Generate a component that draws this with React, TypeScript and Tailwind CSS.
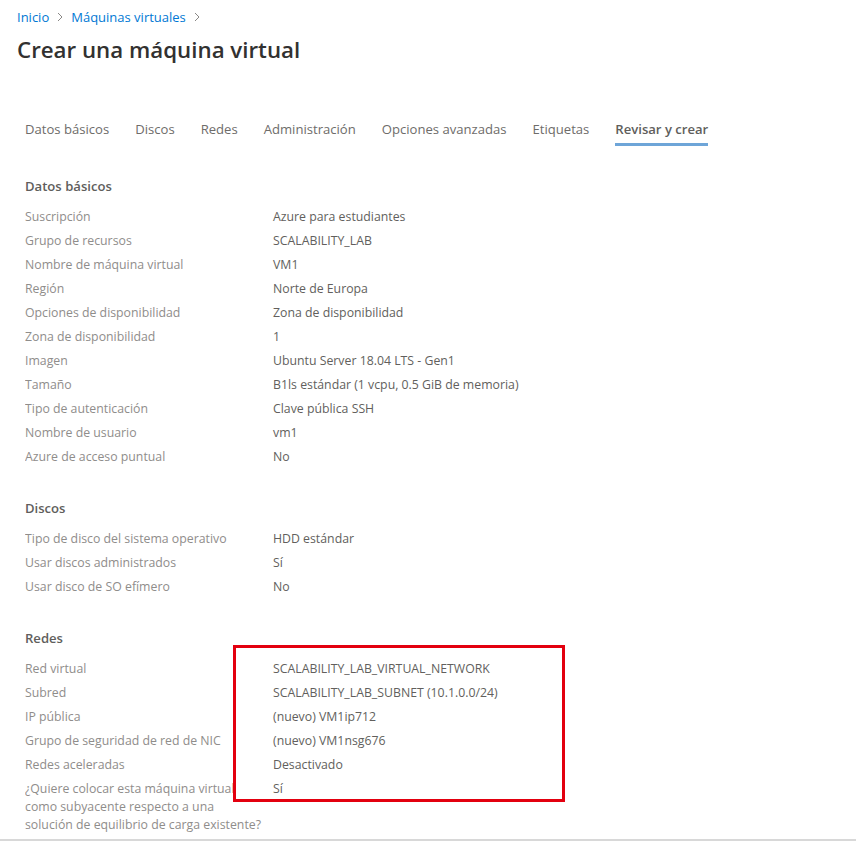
const tabs = [
    'Datos básicos',
    'Discos',
    'Redes',
    'Administración',
    'Opciones avanzadas',
    'Etiquetas',
    'Revisar y crear',
];

type Row = { label: React.ReactNode; value: string };

const basics: Row[] = [
    { label: 'Suscripción', value: 'Azure para estudiantes' },
    { label: 'Grupo de recursos', value: 'SCALABILITY_LAB' },
    { label: 'Nombre de máquina virtual', value: 'VM1' },
    { label: 'Región', value: 'Norte de Europa' },
    { label: 'Opciones de disponibilidad', value: 'Zona de disponibilidad' },
    { label: 'Zona de disponibilidad', value: '1' },
    { label: 'Imagen', value: 'Ubuntu Server 18.04 LTS - Gen1' },
    { label: 'Tamaño', value: 'B1ls estándar (1 vcpu, 0.5 GiB de memoria)' },
    { label: 'Tipo de autenticación', value: 'Clave pública SSH' },
    { label: 'Nombre de usuario', value: 'vm1' },
    { label: 'Azure de acceso puntual', value: 'No' },
];

const disks: Row[] = [
    { label: 'Tipo de disco del sistema operativo', value: 'HDD estándar' },
    { label: 'Usar discos administrados', value: 'Sí' },
    { label: 'Usar disco de SO efímero', value: 'No' },
];

const networks: Row[] = [
    { label: 'Red virtual', value: 'SCALABILITY_LAB_VIRTUAL_NETWORK' },
    { label: 'Subred', value: 'SCALABILITY_LAB_SUBNET (10.1.0.0/24)' },
    { label: 'IP pública', value: '(nuevo) VM1ip712' },
    { label: 'Grupo de seguridad de red de NIC', value: '(nuevo) VM1nsg676' },
    { label: 'Redes aceleradas', value: 'Desactivado' },
    {
        label: (
            <>
                ¿Quiere colocar esta máquina virtual
                <br />
                como subyacente respecto a una
                <br />
                solución de equilibrio de carga existente?
            </>
        ),
        value: 'Sí',
    },
];

const Section = ({ title, rows }: { title: string; rows: Row[] }) => (
    <section className="mt-[30px]">
        <h2 className="text-[13.1px] leading-[20px] font-semibold text-[#605e5c]">{title}</h2>
        <div className="mt-[8px] flex flex-col">
            {rows.map((r, i) => (
                <div key={i} className="flex pt-[4px] pb-[2px] text-[12.3px] leading-[18px]">
                    <div className="w-[248px] shrink-0 text-[#8f8d8b] whitespace-nowrap overflow-hidden">{r.label}</div>
                    <div className="text-[#625f5d]">{r.value}</div>
                </div>
            ))}
        </div>
    </section>
);

const Chevron = () => (
    <span className="mx-[7px] text-[#8a8886]">
        <svg width="8" height="10" viewBox="0 0 8 10" fill="none" stroke="currentColor" strokeWidth="1">
            <path d="M2 1l4 4-4 4" />
        </svg>
    </span>
);

export default function App() {
    return (
        <div className="relative w-[856px] h-[842px] overflow-hidden bg-white font-['Segoe_UI','Open_Sans',sans-serif]">
            <div className="pl-[17px] pt-[8px]">
                <nav className="flex items-center text-[13px] leading-[18px] text-[#0078d4]">
                    <span>Inicio</span>
                    <Chevron />
                    <span>Máquinas virtuales</span>
                    <Chevron />
                </nav>
                <h1 className="mt-[8px] text-[22.3px] leading-[32px] font-semibold text-[#323130]">Crear una máquina virtual</h1>
            </div>

            <div className="pl-[25px]">
                <ul className="mt-[53px] flex gap-[26px] text-[13.1px] leading-[20px]">
                    {tabs.map((t, i) => {
                        const active = i === tabs.length - 1;
                        return (
                            <li
                                key={t}
                                className={
                                    active
                                        ? 'pb-[4px] border-b-[3px] border-[#6ea5d8] text-[#605e5c] font-semibold'
                                        : 'pb-[4px] border-b-[3px] border-transparent text-[#6e6c6a]'
                                }
                            >
                                {t}
                            </li>
                        );
                    })}
                </ul>

                <Section title="Datos básicos" rows={basics} />
                <Section title="Discos" rows={disks} />
                <Section title="Redes" rows={networks} />
            </div>

            <div className="mt-[3px] border-t-2 border-[#d8d8d8]" />

            {/* annotation box */}
            <div className="absolute left-[233px] top-[645px] w-[332px] h-[157px] border-[3px] border-[#e3000f]" />
        </div>
    );
}
